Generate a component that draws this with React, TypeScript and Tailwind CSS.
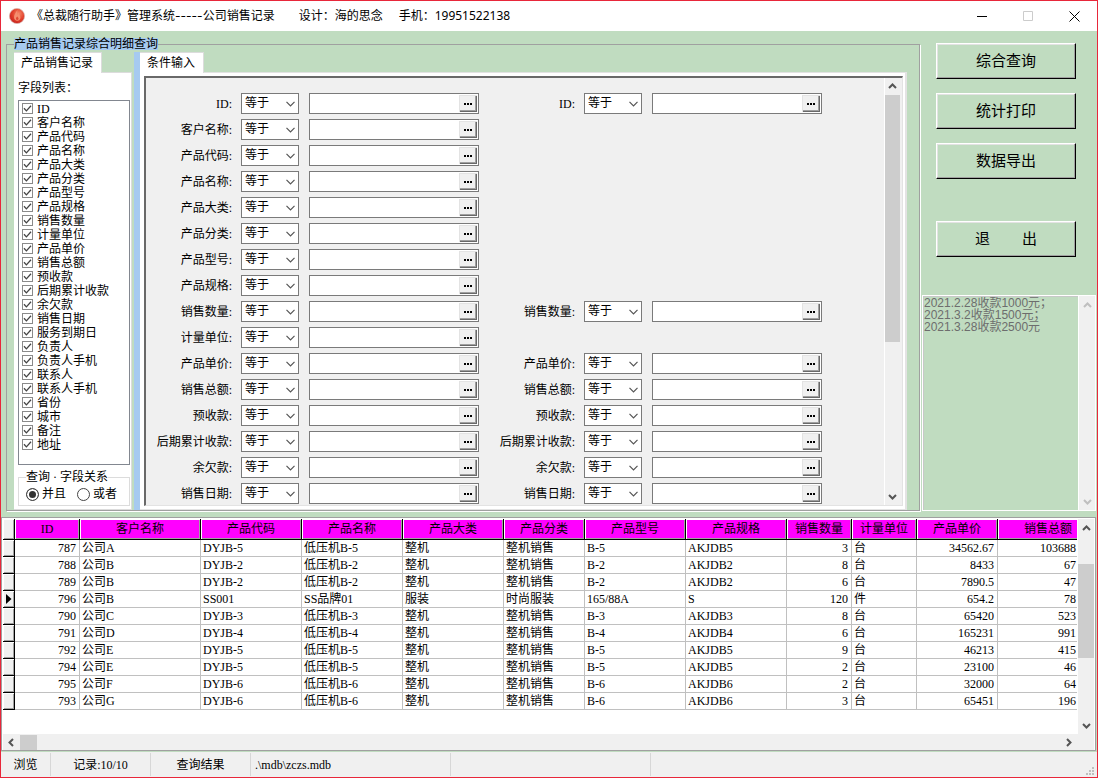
import React, { useState } from "react";

const fields = [
  "ID", "客户名称", "产品代码", "产品名称", "产品大类", "产品分类", "产品型号", "产品规格",
  "销售数量", "计量单位", "产品单价", "销售总额", "预收款", "后期累计收款", "余欠款", "销售日期",
  "服务到期日", "负责人", "负责人手机", "联系人", "联系人手机", "省份", "城市", "备注", "地址",
];

const ranged = new Set(["ID", "销售数量", "产品单价", "销售总额", "预收款", "后期累计收款", "余欠款", "销售日期"]);

type Column = { title: string; width: string; numeric?: boolean; last?: boolean };

const columns: Column[] = [
  { title: "ID", width: "w-[65px]", numeric: true },
  { title: "客户名称", width: "w-[121px]" },
  { title: "产品代码", width: "w-[101px]" },
  { title: "产品名称", width: "w-[101px]" },
  { title: "产品大类", width: "w-[101px]" },
  { title: "产品分类", width: "w-[81px]" },
  { title: "产品型号", width: "w-[101px]" },
  { title: "产品规格", width: "w-[101px]" },
  { title: "销售数量", width: "w-[65px]", numeric: true },
  { title: "计量单位", width: "w-[65px]" },
  { title: "产品单价", width: "w-[81px]", numeric: true },
  { title: "销售总额", width: "w-[101px]", numeric: true, last: true },
];

const rows = [
  ["787", "公司A", "DYJB-5", "低压机B-5", "整机", "整机销售", "B-5", "AKJDB5", "3", "台", "34562.67", "103688"],
  ["788", "公司B", "DYJB-2", "低压机B-2", "整机", "整机销售", "B-2", "AKJDB2", "8", "台", "8433", "67"],
  ["789", "公司B", "DYJB-2", "低压机B-2", "整机", "整机销售", "B-2", "AKJDB2", "6", "台", "7890.5", "47"],
  ["796", "公司B", "SS001", "SS品牌01", "服装", "时尚服装", "165/88A", "S", "120", "件", "654.2", "78"],
  ["790", "公司C", "DYJB-3", "低压机B-3", "整机", "整机销售", "B-3", "AKJDB3", "8", "台", "65420", "523"],
  ["791", "公司D", "DYJB-4", "低压机B-4", "整机", "整机销售", "B-4", "AKJDB4", "6", "台", "165231", "991"],
  ["792", "公司E", "DYJB-5", "低压机B-5", "整机", "整机销售", "B-5", "AKJDB5", "9", "台", "46213", "415"],
  ["794", "公司E", "DYJB-5", "低压机B-5", "整机", "整机销售", "B-5", "AKJDB5", "2", "台", "23100", "46"],
  ["795", "公司F", "DYJB-6", "低压机B-6", "整机", "整机销售", "B-6", "AKJDB6", "2", "台", "32000", "64"],
  ["793", "公司G", "DYJB-6", "低压机B-6", "整机", "整机销售", "B-6", "AKJDB6", "3", "台", "65451", "196"],
];

const currentId = "796";

const arrowPaths = {
  up: "M1 6 L4.5 2.5 L8 6",
  down: "M1 3 L4.5 6.5 L8 3",
  left: "M6 1 L2.5 4.5 L6 8",
  right: "M3 1 L6.5 4.5 L3 8",
};

function Arrow({ dir, tone = "#555555" }: { dir: keyof typeof arrowPaths; tone?: string }) {
  return (
    <svg width="9" height="9" viewBox="0 0 9 9" fill="none" stroke={tone} strokeWidth="2" aria-hidden="true">
      <path d={arrowPaths[dir]} />
    </svg>
  );
}

function AppIcon() {
  return (
    <svg width="18" height="18" viewBox="0 0 18 18" aria-hidden="true">
      <defs>
        <radialGradient id="ball" cx="0.6" cy="0.35" r="0.7">
          <stop offset="0" stopColor="#f58a6a" />
          <stop offset="0.55" stopColor="#e2412c" />
          <stop offset="1" stopColor="#c4201c" />
        </radialGradient>
      </defs>
      <circle cx="9" cy="9" r="7.6" fill="url(#ball)" stroke="#d9b3ae" strokeWidth="0.7" />
      <path d="M9.4 3 C8 5.4 6 7.4 6 10.3 C6 12.6 7.6 13.8 9.2 13.8 C11.2 13.8 12.6 12.4 12.4 10.2 C12.2 8.6 11.2 8 11 6.2 C10.4 6.8 10 7.4 9.9 8.2 C9.3 6.8 9.2 5 9.4 3 Z" fill="#f58f70" />
      <path d="M9.2 9.4 C8.2 10.3 7.8 11.2 8 12.2 C8.4 13.2 10.2 13.3 10.6 12.1 C10.8 11 9.9 10.2 9.2 9.4 Z" fill="#df4a34" />
    </svg>
  );
}

function TitleBar() {
  return (
    <header className="flex h-[30px] items-center bg-white pl-[7px] font-['Noto_Sans','Noto_Sans_CJK_SC',sans-serif] text-xs text-black">
      <AppIcon />
      <h1 className="ml-[5px] flex flex-1 whitespace-nowrap">
        <span>《总裁随行助手》管理系统<span className="font-['Inter',sans-serif]">-----</span>公司销售记录</span>
        <span className="ml-6">设计：海的思念</span>
        <span className="ml-4">手机：19951522138</span>
      </h1>
      <button type="button" aria-label="最小化" className="grid h-full w-[46px] place-items-center">
        <svg width="11" height="11" viewBox="0 0 11 11" stroke="#000" aria-hidden="true"><path d="M0 5.5H10" /></svg>
      </button>
      <button type="button" aria-label="最大化" disabled className="grid h-full w-[46px] place-items-center">
        <svg width="11" height="11" viewBox="0 0 11 11" fill="none" stroke="#cccccc" aria-hidden="true"><path d="M0.5 0.5H9.5V9.5H0.5Z" /></svg>
      </button>
      <button type="button" aria-label="关闭" className="grid h-full w-[46px] place-items-center">
        <svg width="11" height="11" viewBox="0 0 11 11" stroke="#000" aria-hidden="true"><path d="M0.5 0.5L10.5 10.5M10.5 0.5L0.5 10.5" /></svg>
      </button>
    </header>
  );
}

function FieldCheck({ name }: { name: string }) {
  return (
    <label className="flex h-[14px] items-center gap-1 leading-[14px] whitespace-nowrap">
      <span className="grid">
        <input type="checkbox" defaultChecked className="peer col-start-1 row-start-1 size-[11px] appearance-none border border-[#8a8a8a] bg-white" />
        <svg width="11" height="11" viewBox="0 0 11 11" fill="none" stroke="#444" strokeWidth="1.3" aria-hidden="true" className="pointer-events-none invisible col-start-1 row-start-1 peer-checked:visible">
          <path d="M2 5.3L4.4 7.9L9 2.8" />
        </svg>
      </span>
      <span className="pt-0.5">{name}</span>
    </label>
  );
}

function FieldPanel() {
  return (
    <div className="flex w-[118px] shrink-0 flex-col">
      <div className="z-10 -mb-px h-[21px] w-[88px] border-t border-r border-[#dcdcdc] bg-white pl-[7px] leading-5 whitespace-nowrap">产品销售记录</div>
      <div className="flex flex-1 flex-col border-t border-r border-b border-[#dcdcdc] bg-white pt-[9px] pr-px pb-[3px] pl-1">
        <div className="leading-3">字段列表：</div>
        <div className="mt-1.5 h-0 min-h-[365px] flex-1 border border-[#828790] bg-white pl-[3px]">
          {fields.map((f) => <FieldCheck key={f} name={f} />)}
        </div>
        <fieldset className="mt-1.5 border border-[#dcdcdc] px-[7px] pb-1">
          <legend className="leading-3 whitespace-nowrap">查询 · 字段关系</legend>
          <div className="mt-1 flex gap-[11px]">
            {["并且", "或者"].map((t, i) => (
              <label key={t} className="flex items-center gap-[3px] leading-[14px] whitespace-nowrap">
                <input type="radio" name="relation" defaultChecked={i === 0} className="size-[13px] appearance-none rounded-full border border-[#444] bg-white shadow-[inset_0_0_0_2px_#fff] checked:bg-[#333]" />
                {t}
              </label>
            ))}
          </div>
        </fieldset>
      </div>
    </div>
  );
}

function Condition({ name, part }: { name: string; part: string }) {
  const id = `${part}-${name}`;
  return (
    <div className="flex h-[21px] w-[333px] shrink-0 items-center">
      <label htmlFor={id} className="w-[88px] shrink-0 pr-0.5 text-right whitespace-nowrap">{name}:</label>
      <div className="ml-[7px] grid h-[21px] w-[58px] shrink-0 items-center">
        <select id={id} className="col-start-1 row-start-1 h-[21px] w-full appearance-none border border-[#7a7a7a] bg-white pb-0.5 pl-[3px] leading-4">
          <option>等于</option>
          <option>大于</option>
          <option>小于</option>
          <option>包含</option>
        </select>
        <svg width="9" height="6" viewBox="0 0 9 6" fill="none" stroke="#555" strokeWidth="1.2" aria-hidden="true" className="pointer-events-none col-start-1 row-start-1 mr-1 justify-self-end">
          <path d="M0.5 0.8L4.5 4.8L8.5 0.8" />
        </svg>
      </div>
      <div className="ml-2.5 flex h-[21px] min-w-0 flex-1 border border-[#7a7a7a] bg-white p-px">
        <input type="text" aria-label={name} className="min-w-0 flex-1 bg-white px-1 outline-none" />
        <button type="button" aria-label={`选择${name}`} className="grid w-[18px] place-items-center border-t border-l border-t-[#e3e3e3] border-l-[#e3e3e3] bg-[#f0f0f0] pr-0.5 shadow-[inset_-1px_-1px_0_#696969,inset_-2px_-2px_0_#a0a0a0]">
          <svg width="8" height="2" viewBox="0 0 8 2" aria-hidden="true"><path d="M0 0H2V2H0ZM3 0H5V2H3ZM6 0H8V2H6Z" /></svg>
        </button>
      </div>
    </div>
  );
}

function ConditionPanel() {
  return (
    <div className="flex min-w-0 flex-1 flex-col">
      <div className="z-10 -mb-px h-[21px] w-[64px] border-t border-r border-[#dcdcdc] bg-white pl-[7px] leading-5 whitespace-nowrap">条件输入</div>
      <div className="flex flex-1 border-t border-r-2 border-b border-[#e3e3e3] bg-white pt-[3px] pr-[2px] pb-[3px] pl-1">
        <div className="flex min-w-0 flex-1 border-t-2 border-r border-b border-l-2 border-t-[#696969] border-r-[#e3e3e3] border-b-[#e3e3e3] border-l-[#696969] bg-[#f0f0f0]">
          <div className="flex min-w-0 flex-1 flex-col gap-[5px] overflow-hidden pt-[15px]">
            {fields.slice(0, 16).map((f) => (
              <div key={f} className="flex gap-2.5">
                <Condition name={f} part="from" />
                {ranged.has(f) && <Condition name={f} part="to" />}
              </div>
            ))}
          </div>
          <div className="flex w-[18px] shrink-0 flex-col items-center border-l border-white bg-[#f0f0f0] pr-0.5">
            <div className="grid h-[17px] place-items-center"><Arrow dir="up" /></div>
            <div className="h-[247px] w-full bg-[#cdcdcd]" />
            <div className="mt-auto grid h-[17px] place-items-center"><Arrow dir="down" /></div>
          </div>
        </div>
      </div>
    </div>
  );
}

function ActionButton({ children }: { children: React.ReactNode }) {
  return (
    <button type="button" className="flex h-9 w-full items-center justify-center border-t border-r border-b border-l border-t-white border-r-black border-b-black border-l-white bg-[#c0dcc0] pt-0.5 text-[15px] whitespace-pre shadow-[inset_-1px_-1px_0_#a0a0a0,inset_1px_1px_0_#e3e3e3]">
      {children}
    </button>
  );
}

function SidePanel() {
  const [memo, setMemo] = useState("2021.2.28收款1000元；\n2021.3.2收款1500元；\n2021.3.28收款2500元");
  return (
    <aside className="flex w-44 shrink-0 flex-col pt-3">
      <div className="flex flex-col gap-3.5 pr-[21px] pl-[15px]">
        <ActionButton>综合查询</ActionButton>
        <ActionButton>统计打印</ActionButton>
        <ActionButton>数据导出</ActionButton>
        <div className="mt-7">
          <ActionButton><span className="mr-8">退</span><span>出</span></ActionButton>
        </div>
      </div>
      <div className="mt-[38px] mr-px ml-px flex flex-1 border border-white">
        <textarea
          aria-label="收款记录"
          value={memo}
          onChange={(e) => setMemo(e.target.value)}
          className="min-w-0 flex-1 resize-none overflow-hidden border-t border-l border-[#c8c8c8] bg-[#c0dcc0] font-['Liberation_Sans','Noto_Sans_CJK_SC',sans-serif] text-xs leading-3 whitespace-pre text-[#6d6d6d] outline-none"
        />
        <div className="flex w-[17px] flex-col items-center justify-between border-l border-white bg-[#f0f0f0]">
          <div className="grid h-[18px] place-items-center"><Arrow dir="up" tone="#bfbfbf" /></div>
          <div className="grid h-[18px] place-items-center"><Arrow dir="down" tone="#bfbfbf" /></div>
        </div>
      </div>
    </aside>
  );
}

const gutter = "border-r border-b border-black bg-[#f0f0f0] p-0 shadow-[inset_1px_1px_0_#fff,inset_-1px_-1px_0_#a0a0a0]";

function RecordTable() {
  return (
    <section className="mt-1.5 mr-px flex flex-1 flex-col border border-[#a0a0a0] bg-white p-px pb-0">
      <div className="flex flex-1">
        <div className="h-[214px] w-0 flex-1 overflow-hidden">
          <table className="w-[1096px] table-fixed border-separate border-spacing-0 leading-4">
            <thead>
              <tr className="h-[21px]">
                <th className={`w-3 ${gutter}`} aria-label="当前行" />
                {columns.map((c) => (
                  <th key={c.title} scope="col" className={`${c.width} border-r border-b border-black bg-[#ff00ff] p-0 text-center font-normal whitespace-nowrap shadow-[inset_1px_1px_0_#fff,inset_-1px_-1px_0_#a0a0a0]`}>
                    {c.title}
                  </th>
                ))}
              </tr>
            </thead>
            <tbody>
              {rows.map((r) => (
                <tr key={r[0]} className="h-[17px]">
                  <td className={gutter}>
                    {r[0] === currentId && (
                      <svg width="6" height="10" viewBox="0 0 6 10" aria-label="当前记录" className="ml-[3px] block"><path d="M0 0L5.5 5L0 10Z" /></svg>
                    )}
                  </td>
                  {r.map((v, i) => (
                    <td key={i} className={`overflow-hidden border-r border-b border-[#c0c0c0] py-0 whitespace-nowrap ${columns[i].last ? "pr-[22px] text-right" : columns[i].numeric ? "pr-[3px] text-right" : "pl-0.5"}`}>
                      {v}
                    </td>
                  ))}
                </tr>
              ))}
            </tbody>
          </table>
        </div>
        <div className="flex w-[17px] shrink-0 flex-col border-l border-white bg-[#f0f0f0]">
          <div className="grid h-[45px] place-items-center pb-[26px]"><Arrow dir="up" /></div>
          <div className="h-[94px] bg-[#cdcdcd]" />
          <div className="mt-auto grid h-[17px] place-items-center"><Arrow dir="down" /></div>
        </div>
      </div>
      <div className="flex h-4 items-center bg-[#f0f0f0] pr-[17px]">
        <div className="grid w-[17px] place-items-center"><Arrow dir="left" /></div>
        <div className="h-[15px] w-[17px] bg-[#cdcdcd]" />
        <div className="ml-auto grid w-[17px] place-items-center"><Arrow dir="right" /></div>
      </div>
    </section>
  );
}

function StatusBar() {
  return (
    <footer className="mt-px flex h-[25px] items-center bg-[#f0f0f0] whitespace-nowrap">
      <div className="flex h-[23px] w-[50px] items-center justify-center border-r border-[#d7d7d7]">浏览</div>
      <div className="flex h-[23px] w-[100px] items-center justify-center border-r border-[#d7d7d7]">记录:10/10</div>
      <div className="flex h-[23px] w-[100px] items-center justify-center border-r border-[#d7d7d7]">查询结果</div>
      <div className="flex h-[23px] w-[200px] items-center border-r border-[#d7d7d7] pl-1">.\mdb\zczs.mdb</div>
      <div className="h-[23px] w-[200px] border-r border-[#d7d7d7]" />
      <svg width="9" height="9" viewBox="0 0 9 9" fill="#bfbfbf" aria-hidden="true" className="mr-[2px] mb-px ml-auto self-end">
        <path d="M6 0H8V2H6ZM3 3H5V5H3ZM6 3H8V5H6ZM0 6H2V8H0ZM3 6H5V8H3ZM6 6H8V8H6Z" />
      </svg>
    </footer>
  );
}

export default function App() {
  return (
    <div className="flex min-h-screen flex-col border border-[#e8273a] bg-[#c0dcc0] font-['Liberation_Serif','Noto_Sans_CJK_SC',sans-serif] text-xs text-black">
      <TitleBar />
      <main className="flex flex-1 flex-col">
        <div className="flex">
          <fieldset className="mt-[7px] mr-px ml-[5px] min-w-0 flex-1 border border-[#a0a0a0] pr-3 pl-[7px] shadow-[1px_1px_0_#fff]">
            <legend className="bg-[#a6caf0] leading-3 whitespace-nowrap">产品销售记录综合明细查询</legend>
            <div className="mt-0.5 flex">
              <FieldPanel />
              <div className="ml-[2px] w-1.5 shrink-0 bg-[#a6caf0]" />
              <ConditionPanel />
            </div>
          </fieldset>
          <SidePanel />
        </div>
        <RecordTable />
      </main>
      <StatusBar />
    </div>
  );
}
